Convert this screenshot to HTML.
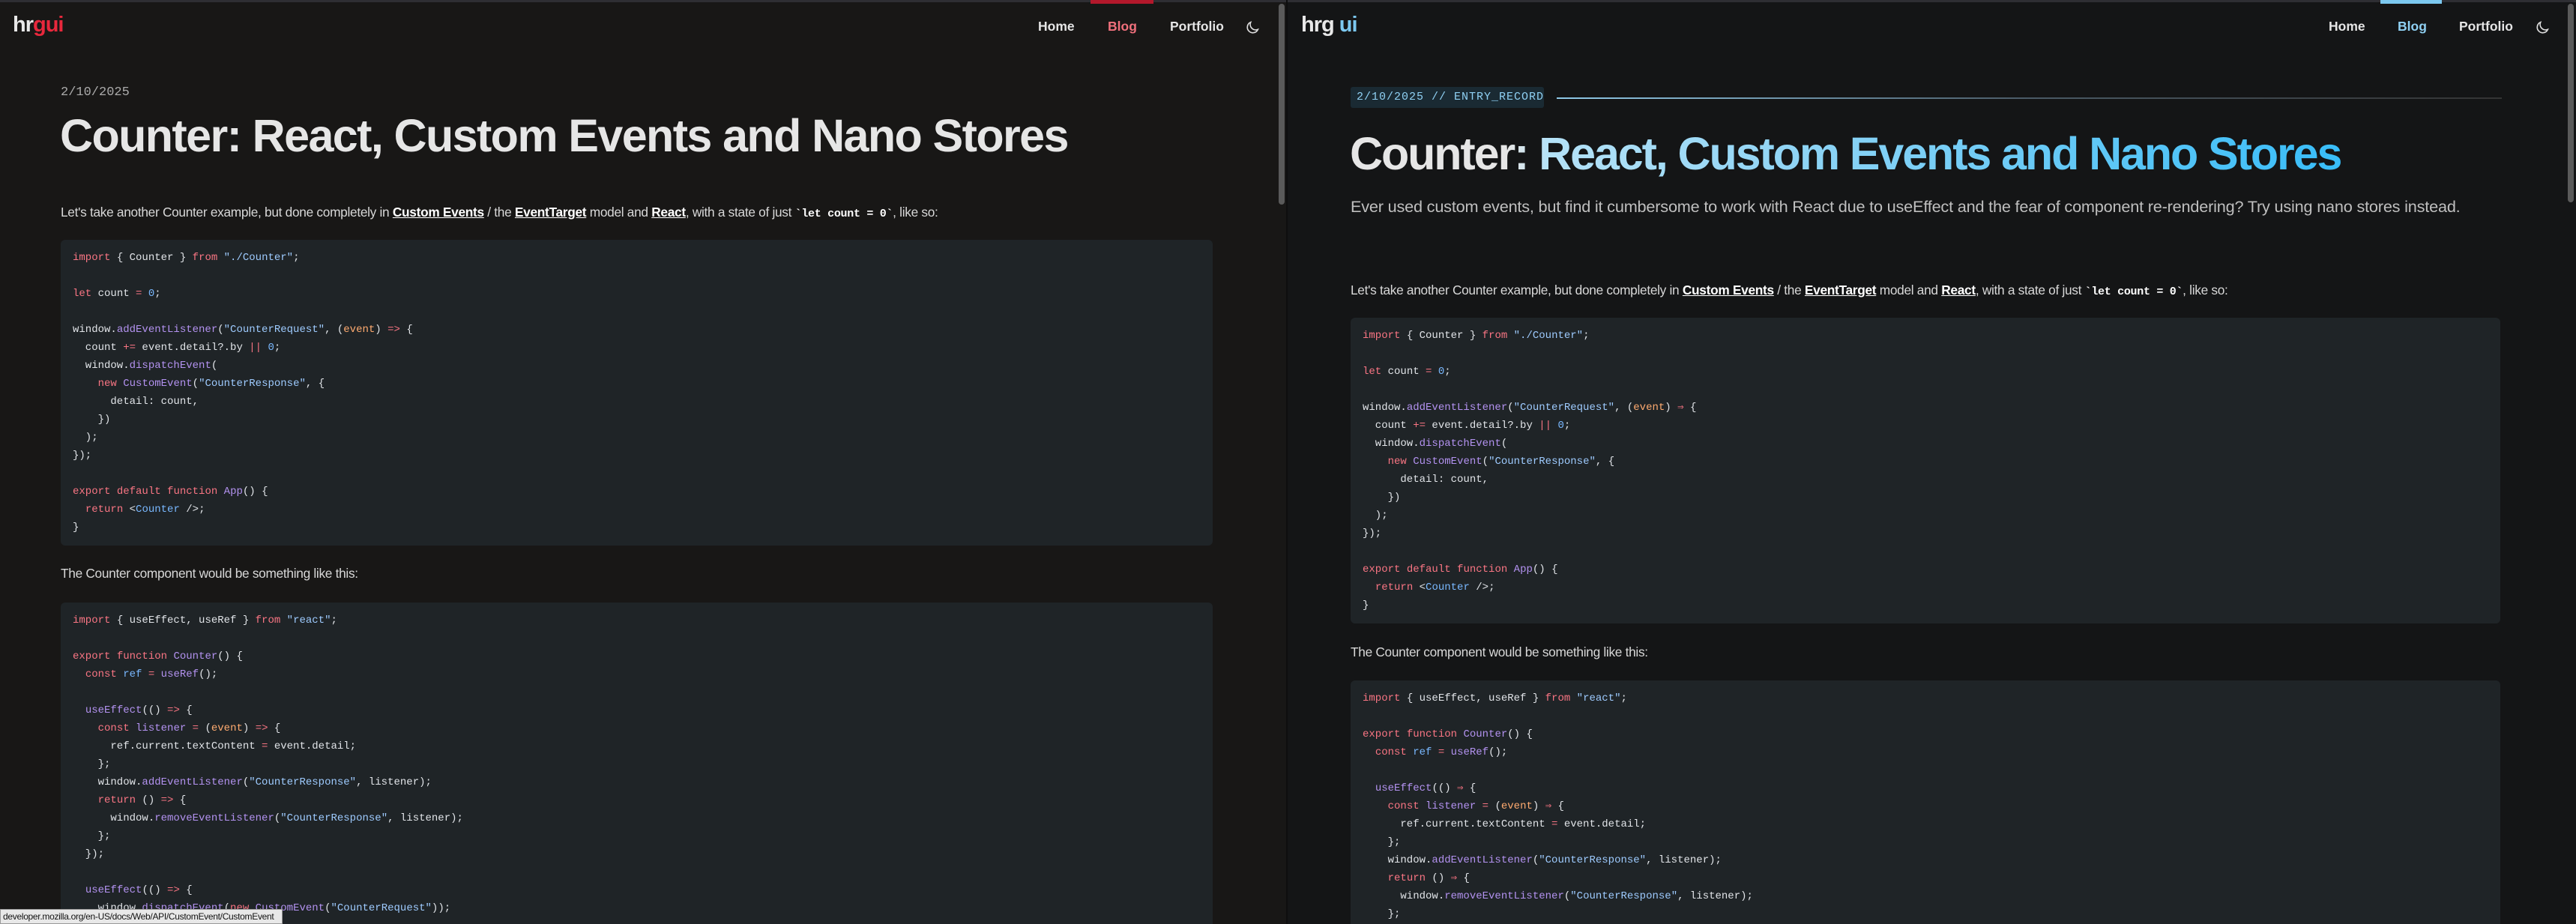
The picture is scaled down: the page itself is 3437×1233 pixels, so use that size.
<!DOCTYPE html>
<html><head><meta charset="utf-8"><style>
*{margin:0;padding:0;box-sizing:border-box}
body{width:3437px;height:1233px;overflow:hidden;background:#0e0e0e;font-family:"Liberation Sans",sans-serif;position:relative}
.pane{position:absolute;top:0;height:1233px;overflow:hidden}
#L{left:0;width:1716px;background:#181716}
#R{left:1718px;width:1719px;background:#141516}
.topline{position:absolute;left:0;right:0;top:0;height:3px;background:#2e2e33}
.abs{position:absolute;white-space:nowrap}
.logo{font-size:29px;font-weight:bold;color:#e8e8e8;letter-spacing:-1px}
.nav{font-size:17.5px;font-weight:bold;color:#e5e5e5}
.title{font-size:61px;font-weight:bold;letter-spacing:-1.6px;color:#e6e6e6}
.p{font-size:17.3px;color:#d8d8d8;letter-spacing:-0.3px}
.p a{color:#fff;font-weight:bold;text-decoration:underline}
.p code{font-family:"Liberation Mono",monospace;font-weight:bold;color:#fff;font-size:15px}
pre{position:absolute;background:#1f2427;border-radius:6px;font-family:"Liberation Mono",monospace;font-size:14px;line-height:24px;color:#e1e4e8;padding:12px 16px;overflow:hidden}
.k{color:#f97583}.f{color:#b392f0}.s{color:#9ecbff}.n{color:#79b8ff}.o{color:#ffab70}
.sb{position:absolute;width:8px;background:#5a5a5a;border-radius:4px}
</style></head><body>

<div class="pane" id="L">
<div class="topline"></div>
<div class="abs" style="left:1455px;top:0;width:84px;height:5px;background:#b3182b"></div>
<div class="abs logo" style="left:17px;top:17px">hr<span style="color:#e8283c">gui</span></div>
<div class="abs nav" style="left:1385px;top:25px">Home</div>
<div class="abs nav" style="left:1478px;top:25px;color:#f0707c">Blog</div>
<div class="abs nav" style="left:1561px;top:25px">Portfolio</div>
<svg class="abs" style="left:1660px;top:25px" width="22" height="24" viewBox="0 0 24 24"><path d="M20 14.5A8 8 0 0 1 9.5 4 8 8 0 1 0 20 14.5z" fill="none" stroke="#ddd" stroke-width="1.8"/></svg>
<div class="abs" style="left:81px;top:114px;font-family:'Liberation Mono',monospace;font-size:17px;color:#aaa">2/10/2025</div>
<div class="abs title" style="left:80px;top:146px">Counter: React, Custom Events and Nano Stores</div>
<div class="abs p" style="left:81px;top:273px">Let's take another Counter example, but done completely in <a>Custom Events</a> / the <a>EventTarget</a> model and <a>React</a>, with a state of just <code>`let count = 0`</code>, like so:</div>
<pre style="left:81px;top:320px;width:1537px;height:408px"><span class="k">import</span> { Counter } <span class="k">from</span> <span class="s">"./Counter"</span>;

<span class="k">let</span> count <span class="k">=</span> <span class="n">0</span>;

window.<span class="f">addEventListener</span>(<span class="s">"CounterRequest"</span>, (<span class="o">event</span>) <span class="k">=&gt;</span> {
  count <span class="k">+=</span> event.detail?.by <span class="k">||</span> <span class="n">0</span>;
  window.<span class="f">dispatchEvent</span>(
    <span class="k">new</span> <span class="f">CustomEvent</span>(<span class="s">"CounterResponse"</span>, {
      detail: count,
    })
  );
});

<span class="k">export</span> <span class="k">default</span> <span class="k">function</span> <span class="f">App</span>() {
  <span class="k">return</span> &lt;<span class="n">Counter</span> /&gt;;
}</pre>
<div class="abs p" style="left:81px;top:755px">The Counter component would be something like this:</div>
<pre style="left:81px;top:804px;width:1537px;height:429px;border-radius:6px 6px 0 0"><span class="k">import</span> { useEffect, useRef } <span class="k">from</span> <span class="s">"react"</span>;

<span class="k">export</span> <span class="k">function</span> <span class="f">Counter</span>() {
  <span class="k">const</span> <span class="n">ref</span> <span class="k">=</span> <span class="f">useRef</span>();

  <span class="f">useEffect</span>(() <span class="k">=&gt;</span> {
    <span class="k">const</span> <span class="f">listener</span> <span class="k">=</span> (<span class="o">event</span>) <span class="k">=&gt;</span> {
      ref.current.textContent <span class="k">=</span> event.detail;
    };
    window.<span class="f">addEventListener</span>(<span class="s">"CounterResponse"</span>, listener);
    <span class="k">return</span> () <span class="k">=&gt;</span> {
      window.<span class="f">removeEventListener</span>(<span class="s">"CounterResponse"</span>, listener);
    };
  });

  <span class="f">useEffect</span>(() <span class="k">=&gt;</span> {
    window.<span class="f">dispatchEvent</span>(<span class="k">new</span> <span class="f">CustomEvent</span>(<span class="s">"CounterRequest"</span>));</pre>
<div class="sb" style="left:1706px;top:5px;height:268px"></div>
<div class="abs" style="left:0;top:1213px;height:20px;width:377px;background:#e8e8e8;border:1px solid #999;font-size:12px;color:#111;padding:2px 3px;letter-spacing:-0.3px;overflow:hidden">developer.mozilla.org/en-US/docs/Web/API/CustomEvent/CustomEvent</div>
</div>

<div class="pane" id="R">
<div class="topline"></div>
<div class="abs" style="left:1458px;top:0;width:82px;height:5px;background:#7cc8f0"></div>
<div class="abs logo" style="left:18px;top:17px">hrg <span style="color:#7cc8f0">ui</span></div>
<div class="abs nav" style="left:1389px;top:25px">Home</div>
<div class="abs nav" style="left:1481px;top:25px;color:#8fd0f3">Blog</div>
<div class="abs nav" style="left:1563px;top:25px">Portfolio</div>
<svg class="abs" style="left:1663px;top:25px" width="22" height="24" viewBox="0 0 24 24"><path d="M20 14.5A8 8 0 0 1 9.5 4 8 8 0 1 0 20 14.5z" fill="none" stroke="#ddd" stroke-width="1.8"/></svg>
<div class="abs" style="left:84px;top:116px;width:258px;height:28px;background:#1a2a33;border-radius:3px;font-family:'Liberation Mono',monospace;font-size:15px;color:#8fd0f3;letter-spacing:1px;line-height:28px;padding-left:8px">2/10/2025 // ENTRY_RECORD</div>
<div class="abs" style="left:359px;top:130px;width:1261px;height:2px;background:linear-gradient(90deg,#8fc9e8,#4a5a66 50%,#333)"></div>
<div class="abs title" style="left:83px;top:170px;letter-spacing:-2.1px;background:linear-gradient(90deg,#e6e6e6 0%,#e6e6e6 16%,#b5e2f7 20%,#8fd4f5 45%,#38bdf8 100%);-webkit-background-clip:text;background-clip:text;color:transparent">Counter: React, Custom Events and Nano Stores</div>
<div class="abs" style="left:84px;top:263px;font-size:21.7px;color:#bfbfbf;letter-spacing:-0.2px">Ever used custom events, but find it cumbersome to work with React due to useEffect and the fear of component re-rendering? Try using nano stores instead.</div>
<div class="abs p" style="left:84px;top:377px">Let's take another Counter example, but done completely in <a>Custom Events</a> / the <a>EventTarget</a> model and <a>React</a>, with a state of just <code>`let count = 0`</code>, like so:</div>
<pre style="left:84px;top:424px;width:1534px;height:408px"><span class="k">import</span> { Counter } <span class="k">from</span> <span class="s">"./Counter"</span>;

<span class="k">let</span> count <span class="k">=</span> <span class="n">0</span>;

window.<span class="f">addEventListener</span>(<span class="s">"CounterRequest"</span>, (<span class="o">event</span>) <span class="k">⇒</span> {
  count <span class="k">+=</span> event.detail?.by <span class="k">||</span> <span class="n">0</span>;
  window.<span class="f">dispatchEvent</span>(
    <span class="k">new</span> <span class="f">CustomEvent</span>(<span class="s">"CounterResponse"</span>, {
      detail: count,
    })
  );
});

<span class="k">export</span> <span class="k">default</span> <span class="k">function</span> <span class="f">App</span>() {
  <span class="k">return</span> &lt;<span class="n">Counter</span> /&gt;;
}</pre>
<div class="abs p" style="left:84px;top:860px">The Counter component would be something like this:</div>
<pre style="left:84px;top:908px;width:1534px;height:325px;border-radius:6px 6px 0 0"><span class="k">import</span> { useEffect, useRef } <span class="k">from</span> <span class="s">"react"</span>;

<span class="k">export</span> <span class="k">function</span> <span class="f">Counter</span>() {
  <span class="k">const</span> <span class="n">ref</span> <span class="k">=</span> <span class="f">useRef</span>();

  <span class="f">useEffect</span>(() <span class="k">⇒</span> {
    <span class="k">const</span> <span class="f">listener</span> <span class="k">=</span> (<span class="o">event</span>) <span class="k">⇒</span> {
      ref.current.textContent <span class="k">=</span> event.detail;
    };
    window.<span class="f">addEventListener</span>(<span class="s">"CounterResponse"</span>, listener);
    <span class="k">return</span> () <span class="k">⇒</span> {
      window.<span class="f">removeEventListener</span>(<span class="s">"CounterResponse"</span>, listener);
    };</pre>
<div class="sb" style="left:1708px;top:5px;height:265px"></div>
</div>
</body></html>
